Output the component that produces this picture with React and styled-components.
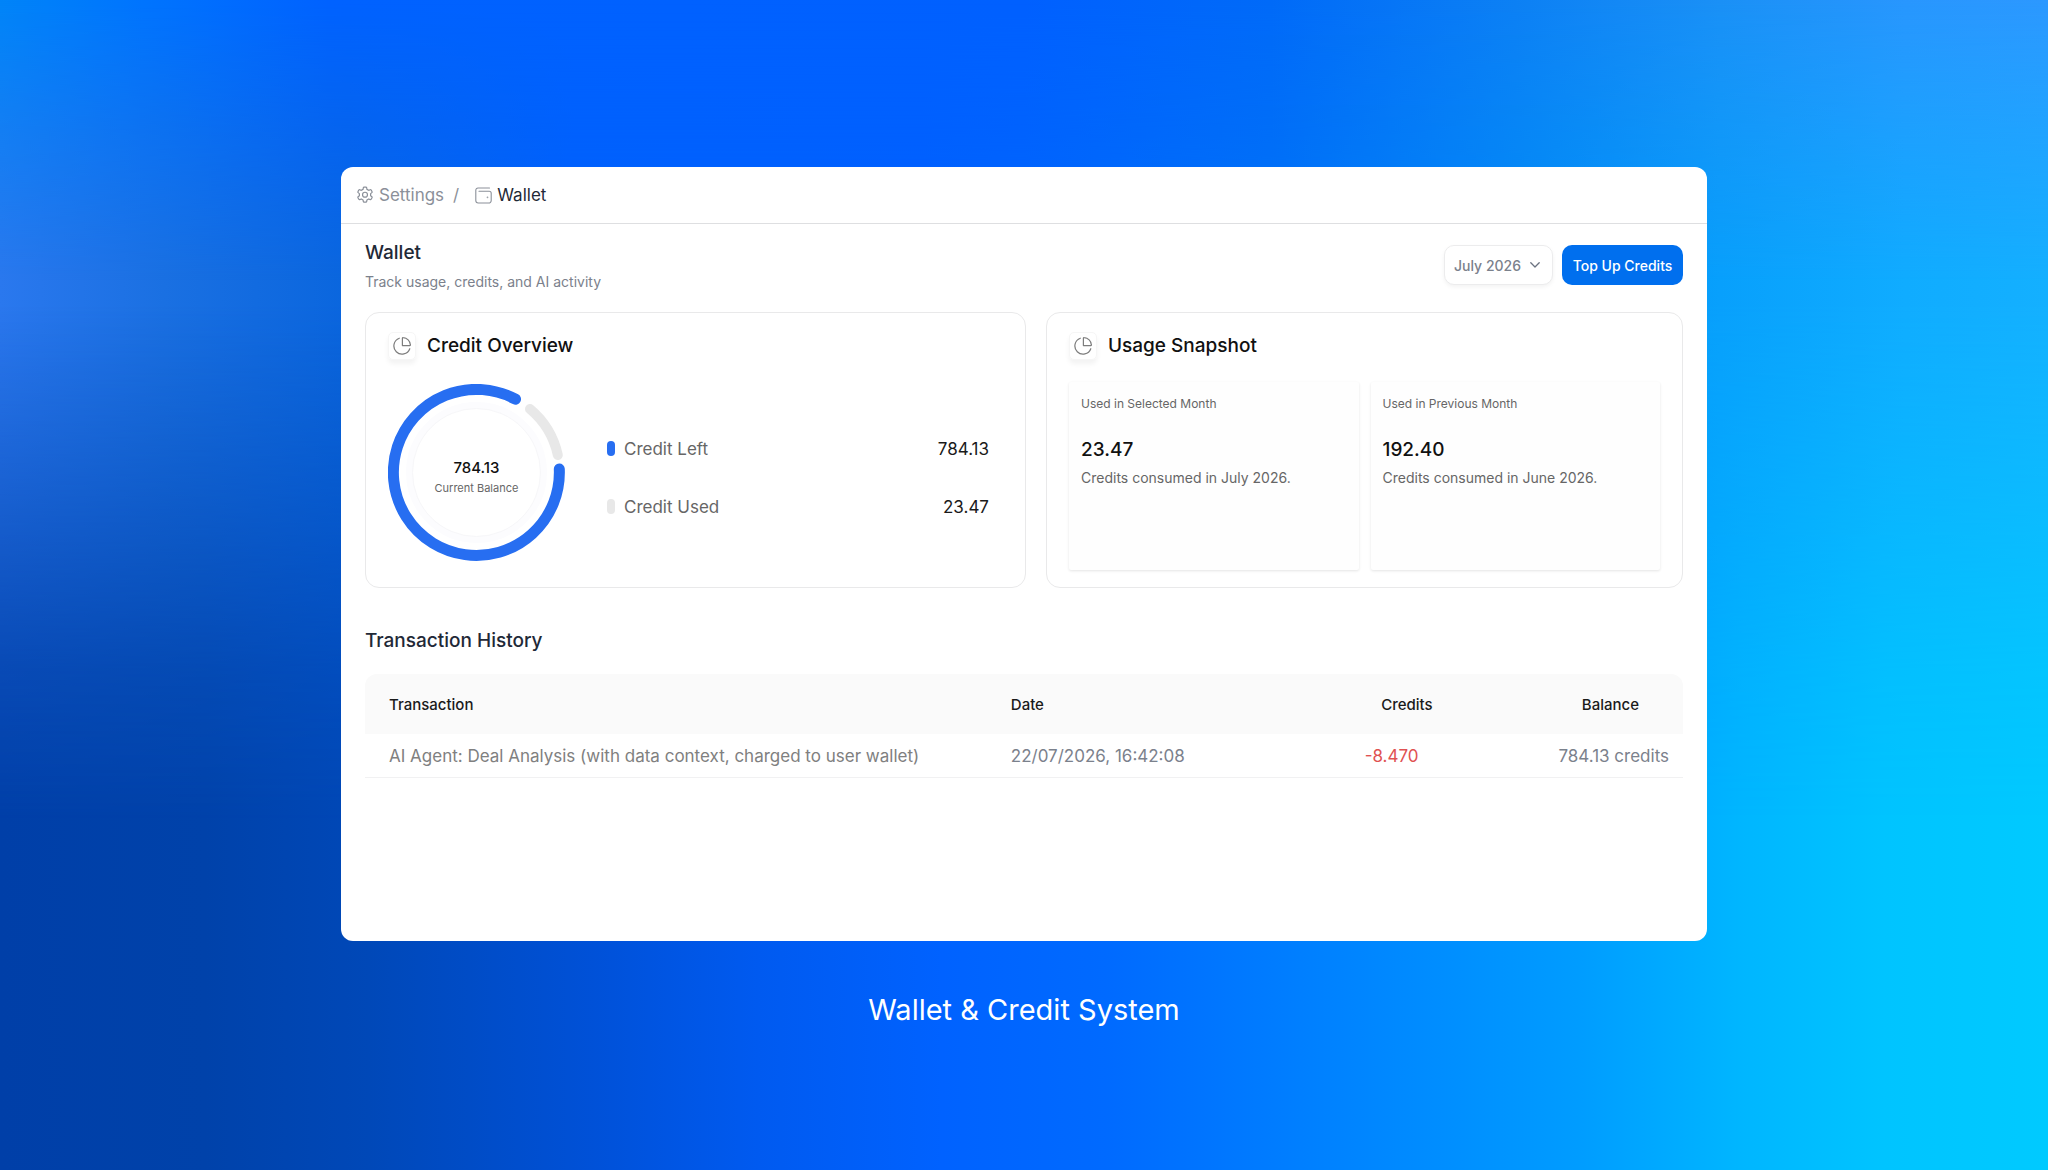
import { useState } from "react";
import styled, { createGlobalStyle } from "styled-components";

const GlobalStyle = createGlobalStyle`
  *, *::before, *::after {
    box-sizing: border-box;
  }

  body {
    margin: 0;
    font-family: 'Inter', 'Liberation Sans', sans-serif;
    background: #0062ff;
  }

  h1, h2, h3, p, dl, dd {
    margin: 0;
    font-weight: 400;
  }
`;

// Three horizontal colour ramps (top, middle, bottom) faded into each other.
const Stage = styled.main`
  position: relative;
  isolation: isolate;
  min-height: 100vh;
  padding: 167px 16.65% 64px;
  display: flex;
  flex-direction: column;
  align-items: stretch;
  background: linear-gradient(90deg, #003fa8 0%, #0042aa 10%, #0048b8 18%, #0051d8 29%, #005af0 37%, #0062ff 46%, #006aff 54%, #0080ff 64%, #009cff 77%, #00b6ff 85%, #00c4ff 92%, #00caff 100%);

  &::before,
  &::after {
    content: '';
    position: absolute;
    inset: 0;
    z-index: -1;
  }

  &::before {
    background: linear-gradient(90deg, #2a78ee 0%, #1a70e2 8%, #0a66de 17%, #0060fc 28%, #0060ff 45%, #0072f8 62%, #0090f8 76%, #08a0fc 84%, #10acff 93%, #14b0ff 100%);
    mask-image: linear-gradient(180deg, #000 0%, #000 26%, rgba(0, 0, 0, 0.6) 42%, rgba(0, 0, 0, 0.2) 57%, transparent 70%);
  }

  &::after {
    background: linear-gradient(90deg, #0084f8 0%, #0074fe 7%, #0062ff 16%, #0060ff 50%, #006af8 62%, #0c80f4 74%, #1a90f6 84%, #2896fe 93%, #2c98ff 100%);
    mask-image: linear-gradient(180deg, #000 0%, transparent 24%);
  }
`;

const Window = styled.section`
  min-height: 774px;
  background: #ffffff;
  border-radius: 12px;
  overflow: hidden;
`;

const Breadcrumb = styled.nav`
  display: flex;
  align-items: center;
  height: 57px;
  padding: 0 15px;
  border-bottom: 1px solid #dedfe1;
  font-size: 17px;
  color: #8b9099;
`;

const Crumb = styled.a`
  display: flex;
  align-items: center;
  gap: 5px;
  color: ${(props) => (props.$current ? "#1f2937" : "#8b9099")};
  text-decoration: none;

  svg {
    color: #8b9099;
  }
`;

const Slash = styled.span`
  margin: 0 16px 0 9px;
`;

const Content = styled.div`
  padding: 17px 24px;
`;

const PageHead = styled.header`
  display: flex;
  justify-content: space-between;
  align-items: flex-start;
  margin-bottom: 20px;
`;

const Title = styled.h1`
  font-size: 19px;
  line-height: 24px;
  font-weight: 500;
  color: #1f2937;
`;

const Subtitle = styled.p`
  margin-top: 7px;
  font-size: 14px;
  line-height: 20px;
  color: #7b818c;
`;

const Actions = styled.div`
  display: flex;
  gap: 9px;
  padding-top: 4px;
`;

const MonthPicker = styled.label`
  position: relative;
  display: flex;
  align-items: center;

  svg {
    position: absolute;
    right: 13px;
    color: #6b7280;
    pointer-events: none;
  }
`;

const MonthSelect = styled.select`
  appearance: none;
  height: 40px;
  width: 109px;
  padding: 0 24px 0 9px;
  border: 1px solid #ececed;
  border-radius: 10px;
  background: #ffffff;
  box-shadow: 0 2px 4px rgba(0, 0, 0, 0.05);
  font: 500 14px 'Inter', sans-serif;
  color: #7b818c;
`;

const PrimaryButton = styled.button`
  height: 40px;
  min-width: 121px;
  padding: 0 8px;
  border: 0;
  border-radius: 10px;
  background: #006fee;
  font: 500 14px 'Inter', sans-serif;
  color: #ffffff;
`;

const Cards = styled.div`
  display: grid;
  grid-template-columns: 661fr 637fr;
  gap: 20px;
`;

const Card = styled.section`
  min-height: 276px;
  padding: 19px 22px 17px;
  border: 1px solid #e9e9ea;
  border-radius: 14px;
  display: flex;
  flex-direction: column;
`;

const CardHead = styled.div`
  display: flex;
  align-items: center;
  gap: 11px;
`;

const IconTile = styled.span`
  display: grid;
  place-items: center;
  width: 28px;
  height: 28px;
  border-radius: 5px;
  border: 1px solid #f6f6f6;
  box-shadow: 0 4px 5px rgba(0, 0, 0, 0.05);
  color: #7d7d7d;
`;

const CardTitle = styled.h2`
  font-size: 19px;
  line-height: 24px;
  font-weight: 500;
  color: #111111;
`;

const Overview = styled.div`
  display: flex;
  align-items: center;
  gap: 42px;
  padding: 24px 14px 0 0;
`;

const Donut = styled.div`
  display: grid;
  flex: none;
  width: 177px;
  height: 177px;

  > * {
    grid-area: 1 / 1;
  }
`;

const DonutLabel = styled.div`
  padding-top: 10px;
  align-self: center;
  text-align: center;
`;

const DonutValue = styled.div`
  font-size: 15px;
  line-height: 20px;
  font-weight: 500;
  color: #111111;
`;

const DonutCaption = styled.div`
  font-size: 11px;
  line-height: 20px;
  color: #666666;
`;

const Legend = styled.dl`
  flex: 1;
  display: grid;
  gap: 34px;
  padding-top: 10px;
`;

const LegendRow = styled.div`
  display: flex;
  align-items: center;
  justify-content: space-between;
  font-size: 17px;
  line-height: 24px;
`;

const LegendName = styled.dt`
  display: flex;
  align-items: center;
  gap: 9px;
  color: #666666;

  &::before {
    content: '';
    width: 8px;
    height: 15px;
    border-radius: 4px;
    background: ${(props) => props.$color};
  }
`;

const LegendValue = styled.dd`
  color: #1a1a1a;
`;

const Snapshot = styled.div`
  flex: 1;
  display: grid;
  grid-template-columns: 1fr 1fr;
  gap: 12px;
  margin-top: 22px;
`;

const Stat = styled.article`
  padding: 12px;
  border-radius: 2px;
  background: #fefefe;
  box-shadow: 0 1px 3px rgba(0, 0, 0, 0.11);
`;

const StatLabel = styled.h3`
  font-size: 12px;
  line-height: 20px;
  color: #666666;
`;

const StatValue = styled.p`
  margin-top: 24px;
  font-size: 19px;
  line-height: 24px;
  font-weight: 500;
  color: #111111;
`;

const StatNote = styled.p`
  margin-top: 6px;
  font-size: 14px;
  line-height: 20px;
  color: #666666;
`;

const SectionTitle = styled.h2`
  margin: 41px 0 21px;
  font-size: 19px;
  line-height: 24px;
  font-weight: 500;
  color: #1f2937;
`;

const Table = styled.table`
  width: 100%;
  table-layout: fixed;
  border-collapse: separate;
  border-spacing: 0;
`;

const HeadCell = styled.th`
  height: 60px;
  width: ${(props) => props.$width};
  padding: 0 ${(props) => props.$end || "0px"} 0 ${(props) => props.$start || "0px"};
  background: #fafafa;
  text-align: ${(props) => props.$align || "left"};
  font-size: 15px;
  font-weight: 500;
  color: #1a1a1a;

  &:first-child {
    border-top-left-radius: 12px;
  }

  &:last-child {
    border-top-right-radius: 12px;
  }
`;

const Cell = styled.td`
  height: 44px;
  padding: 0 ${(props) => props.$end || "0px"} 0 ${(props) => props.$start || "0px"};
  border-bottom: 1px solid #f1f1f2;
  text-align: ${(props) => props.$align || "left"};
  font-size: 17px;
  color: ${(props) => props.$color || "#7b818c"};
`;

const Caption = styled.p`
  margin-top: 50px;
  text-align: center;
  font-size: 29px;
  line-height: 38px;
  font-weight: 400;
  color: #ffffff;
`;

const GearIcon = () => (
  <svg width="18" height="18" viewBox="0 0 24 24" fill="none" stroke="currentColor" strokeWidth="1.6" strokeLinecap="round" strokeLinejoin="round" aria-hidden="true">
    <path d="M10.8 1.5h2.4a1 1 0 0 1 1 .8l.4 2.2 2.300 1.300 2.100-.8a1 1 0 0 1 1.200.4l1.200 2.100a1 1 0 0 1-.2 1.300l-1.700 1.400v2.700l1.700 1.400a1 1 0 0 1 .2 1.300l-1.200 2.100a1 1 0 0 1-1.200.4l-2.100-.8-2.300 1.300-.4 2.200a1 1 0 0 1-1 .8h-2.400a1 1 0 0 1-1-.8l-.4-2.200-2.300-1.300-2.100.8a1 1 0 0 1-1.200-.4l-1.200-2.100a1 1 0 0 1 .2-1.300l1.700-1.400v-2.700L2.800 8.800a1 1 0 0 1-.2-1.300l1.200-2.100A1 1 0 0 1 5 5l2.100.8 2.300-1.300.4-2.200a1 1 0 0 1 1-.8z" />
    <circle cx="12" cy="11.6" r="3.3" />
  </svg>
);

const WalletIcon = () => (
  <svg width="17" height="17" viewBox="0 0 17 17" fill="none" stroke="currentColor" strokeWidth="1.1" strokeLinecap="round" strokeLinejoin="round" aria-hidden="true">
    <path d="M14.5 1H3a2.2 2.2 0 0 0-2.2 2.2v10.3a2.5 2.5 0 0 0 2.5 2.5h10.400a2.5 2.5 0 0 0 2.5-2.5V6.3a2 2 0 0 0-2-2H4" />
    <circle cx="12.5" cy="10.3" r="0.3" />
  </svg>
);

const PieIcon = () => (
  <svg width="18" height="18" viewBox="0 0 18 18" fill="none" stroke="currentColor" strokeWidth="1.2" strokeLinecap="round" strokeLinejoin="round" aria-hidden="true">
    <path d="M6.3 1.2A8.2 8.2 0 1 0 16.8 11.7" />
    <path d="M9.4 1.2a.6.6 0 0 1 .7-.6A7.6 7.6 0 0 1 17.4 7.9a.6.6 0 0 1-.6.7H9.4z" />
  </svg>
);

const ChevronIcon = () => (
  <svg width="10" height="6" viewBox="0 0 10 6" fill="none" stroke="currentColor" strokeWidth="1.3" strokeLinecap="round" strokeLinejoin="round" aria-hidden="true">
    <path d="M0.8 0.8 5 5l4.2-4.2" />
  </svg>
);

const DonutChart = () => (
  <svg width="177" height="177" viewBox="0 0 177 177" fill="none" strokeLinecap="round" aria-hidden="true">
    <circle cx="88.5" cy="88.5" r="67" stroke="#fcfcfe" strokeWidth="7" />
    <circle cx="88.5" cy="88.5" r="64" stroke="#f7f7f9" strokeWidth="1" />
    <path d="M171.3 85A83 83 0 1 1 127.5 15.2" stroke="#276ef1" strokeWidth="11" />
    <path d="M142 25A83 83 0 0 1 169.8 71" stroke="#e8e8e8" strokeWidth="10" />
  </svg>
);

const stats = [
  { label: "Used in Selected Month", value: "23.47", note: "Credits consumed in July 2026." },
  { label: "Used in Previous Month", value: "192.40", note: "Credits consumed in June 2026." },
];

const legend = [
  { name: "Credit Left", value: "784.13", color: "#276ef1" },
  { name: "Credit Used", value: "23.47", color: "#e8e8e8" },
];

const transactions = [
  {
    name: "AI Agent: Deal Analysis (with data context, charged to user wallet)",
    date: "22/07/2026, 16:42:08",
    credits: "-8.470",
    balance: "784.13 credits",
  },
];

const App = () => {
  const [month, setMonth] = useState("July 2026");

  return (
    <>
      <GlobalStyle />
      <Stage>
        <Window>
          <Breadcrumb aria-label="Breadcrumb">
            <Crumb href="#settings"><GearIcon />Settings</Crumb>
            <Slash>/</Slash>
            <Crumb href="#wallet" $current><WalletIcon />Wallet</Crumb>
          </Breadcrumb>
          <Content>
            <PageHead>
              <div>
                <Title>Wallet</Title>
                <Subtitle>Track usage, credits, and AI activity</Subtitle>
              </div>
              <Actions>
                <MonthPicker>
                  <MonthSelect aria-label="Month" value={month} onChange={(e) => setMonth(e.target.value)}>
                    <option>July 2026</option>
                    <option>June 2026</option>
                  </MonthSelect>
                  <ChevronIcon />
                </MonthPicker>
                <PrimaryButton type="button">Top Up Credits</PrimaryButton>
              </Actions>
            </PageHead>

            <Cards>
              <Card>
                <CardHead>
                  <IconTile><PieIcon /></IconTile>
                  <CardTitle>Credit Overview</CardTitle>
                </CardHead>
                <Overview>
                  <Donut>
                    <DonutChart />
                    <DonutLabel>
                      <DonutValue>784.13</DonutValue>
                      <DonutCaption>Current Balance</DonutCaption>
                    </DonutLabel>
                  </Donut>
                  <Legend>
                    {legend.map((item) => (
                      <LegendRow key={item.name}>
                        <LegendName $color={item.color}>{item.name}</LegendName>
                        <LegendValue>{item.value}</LegendValue>
                      </LegendRow>
                    ))}
                  </Legend>
                </Overview>
              </Card>

              <Card>
                <CardHead>
                  <IconTile><PieIcon /></IconTile>
                  <CardTitle>Usage Snapshot</CardTitle>
                </CardHead>
                <Snapshot>
                  {stats.map((stat) => (
                    <Stat key={stat.label}>
                      <StatLabel>{stat.label}</StatLabel>
                      <StatValue>{stat.value}</StatValue>
                      <StatNote>{stat.note}</StatNote>
                    </Stat>
                  ))}
                </Snapshot>
              </Card>
            </Cards>

            <SectionTitle>Transaction History</SectionTitle>
            <Table>
              <thead>
                <tr>
                  <HeadCell $width="49%" $start="24px">Transaction</HeadCell>
                  <HeadCell $width="19%">Date</HeadCell>
                  <HeadCell $width="13%" $align="right">Credits</HeadCell>
                  <HeadCell $width="19%" $align="right" $end="44px">Balance</HeadCell>
                </tr>
              </thead>
              <tbody>
                {transactions.map((row) => (
                  <tr key={row.date}>
                    <Cell $start="24px" $color="#808080">{row.name}</Cell>
                    <Cell>{row.date}</Cell>
                    <Cell $align="right" $end="14px" $color="#e05252">{row.credits}</Cell>
                    <Cell $align="right" $end="14px">{row.balance}</Cell>
                  </tr>
                ))}
              </tbody>
            </Table>
          </Content>
        </Window>
        <Caption>Wallet &amp; Credit System</Caption>
      </Stage>
    </>
  );
};

export default App;
